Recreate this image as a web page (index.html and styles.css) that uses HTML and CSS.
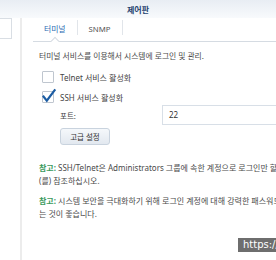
FILE: index.html
```html
<!DOCTYPE html>
<html lang="ko">
<head>
  <meta charset="UTF-8">
  <title>제어판</title>
  <link rel="stylesheet" href="styles.css">
</head>
<body>

  <div class="titlebar"><span class="title">제어판</span></div>

  <div class="window">
    <div class="sidebar">
      <div class="search"></div>
    </div>

    <div class="main">
      <div class="tabs">
        <div class="tab active">터미널</div>
        <div class="tab">SNMP</div>
      </div>

      <div class="panel">
        <p class="desc">터미널 서비스를 이용해서 시스템에 로그인 및 관리.</p>

        <label class="check">
          <span class="box"></span>
          Telnet 서비스 활성화
        </label>

        <label class="check">
          <span class="box">
            <svg width="12" height="12" viewBox="0 0 12 12"><path d="M1.6 5.6 L4.8 9.6 L12.6 -0.8" fill="none" stroke="#1b5ca3" stroke-width="2.2" stroke-linecap="square"/></svg>
          </span>
          SSH 서비스 활성화
        </label>

        <div class="port-row">
          <span class="port-label">포트:</span>
          <div class="input">22</div>
        </div>

        <button class="btn">고급 설정</button>

        <p class="note"><span class="ref">참고:</span> SSH/Telnet은 Administrators 그룹에 속한 계정으로 로그인만 할 수 있습니다. 자세한 내용은 도움말을<br>(를) 참조하십시오.</p>
        <p class="note"><span class="ref">참고:</span> 시스템 보안을 극대화하기 위해 로그인 계정에 대해 강력한 패스워드를 사용하<br>는 것이 좋습니다.</p>
      </div>
    </div>
  </div>

  <div class="watermark">https://</div>

</body>
</html>
```

FILE: styles.css
```css
* {
  box-sizing: border-box;
  margin: 0;
  padding: 0;
}

body {
  width: 276px;
  height: 260px;
  overflow: hidden;
  background: #fff;
  font-family: 'Noto Sans', 'Noto Sans CJK KR', sans-serif;
  font-size: 8px;
  color: #4a4a4a;
  position: relative;
}

.titlebar {
  height: 18px;
  text-align: center;
  background: linear-gradient(180deg, #e8edf3, #f8fafc);
}

.title {
  line-height: 19px;
  font-weight: bold;
  font-size: 8px;
  color: #1f426f;
}

.window {
  display: flex;
  height: 242px;
}

.sidebar {
  width: 22px;
  flex-shrink: 0;
  border-right: 2px solid #ececec;
  display: flex;
  justify-content: flex-end;
  align-items: flex-start;
  overflow: hidden;
}

.search {
  width: 40px;
  height: 21px;
  margin-right: 8px;
  flex-shrink: 0;
  border: 1px solid #d9dee4;
  background: #fff;
}

.main {
  flex: 1;
  overflow: hidden;
  padding-left: 11px;
}

.tabs {
  display: flex;
  align-items: flex-start;
  height: 24px;
  width: 320px;
  border-bottom: 1px solid #d5dbe2;
}

.tab {
  position: relative;
  margin-top: 2px;
  padding: 3px 11px 0;
  height: 15px;
  line-height: 12px;
  font-size: 7.8px;
  border-right: 1px solid #e1e5ea;
  color: #555;
}

.tab.active {
  color: #2c6bb3;
}

/* little notch under the active tab */
.tab.active::after {
  content: "";
  position: absolute;
  left: 50%;
  top: 18px;
  width: 5px;
  height: 5px;
  margin-left: -3px;
  background: #fff;
  border-left: 1px solid #d5dbe2;
  border-top: 1px solid #d5dbe2;
  transform: rotate(45deg);
}

.panel {
  width: 320px;
  padding-left: 6px;
}

.desc {
  margin-top: 8px;
  line-height: 12px;
  font-size: 7.8px;
  white-space: nowrap;
}

.check {
  display: flex;
  align-items: center;
  gap: 6px;
  height: 12px;
  margin-top: 8px;
  padding-left: 3px;
  color: #444;
}

.check:first-of-type {
  margin-top: 9px;
}

.box {
  width: 12px;
  height: 12px;
  border: 1px solid #bfc6cf;
  border-radius: 1px;
  background: #fff;
  position: relative;
}

.box svg {
  position: absolute;
  left: -1px;
  top: -1px;
  overflow: visible;
}

.port-row {
  display: flex;
  align-items: center;
  margin-top: 2px;
  padding-left: 21px;
}

.port-label {
  width: 102px;
  color: #444;
  font-size: 7.5px;
}

.input {
  width: 160px;
  height: 20px;
  border: 1px solid #d8dfe7;
  padding-left: 6px;
  line-height: 18px;
  color: #333;
}

.btn {
  display: block;
  margin: 3px 0 0 21px;
  width: 50px;
  height: 17px;
  border: 1px solid #c9d3de;
  border-radius: 3px;
  background: linear-gradient(180deg, #f5f8fb, #e2e8ef);
  font-family: inherit;
  font-size: 7.5px;
  color: #333;
}

.note {
  margin-top: 16px;
  line-height: 13px;
  white-space: nowrap;
  color: #4a4a4a;
}

.note + .note {
  margin-top: 7px;
}

.ref {
  color: #3b9a5c;
  font-weight: bold;
}

.watermark {
  position: absolute;
  left: 238px;
  top: 238px;
  height: 14px;
  padding: 0 5px;
  background: #6e6e6e;
  color: #fff;
  font-family: 'DejaVu Sans', sans-serif;
  font-size: 10px;
  line-height: 14px;
  white-space: nowrap;
}
```
